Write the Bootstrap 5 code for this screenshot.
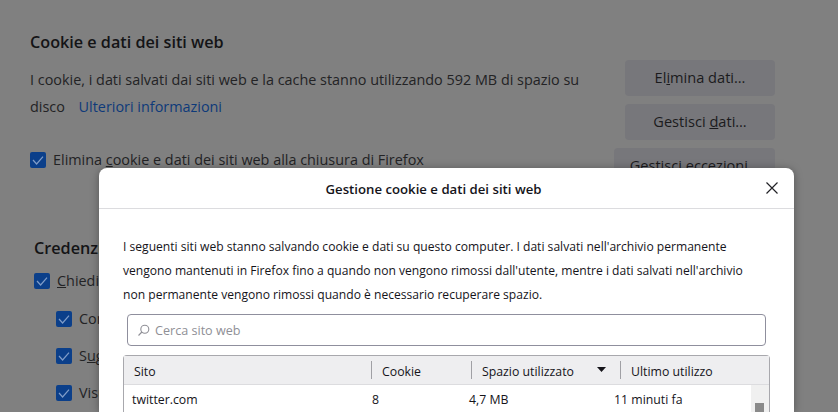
<!DOCTYPE html>
<html lang="it">
<head>
<meta charset="utf-8">
<title>Gestione cookie</title>
<link href="https://cdn.jsdelivr.net/npm/bootstrap@5.3.0/dist/css/bootstrap.min.css" rel="stylesheet">
<style>
html,body{height:412px;overflow:hidden}
body{background:#808080;color:#1b1b1d;font-family:"Open Sans","Noto Sans",sans-serif;font-size:14.4px;position:relative}
.pref-page{padding:32px 63px 0 30px;width:838px}
.pref-title{font-size:16.2px;font-weight:600;line-height:20px;margin:0;color:#141416}
.pref-row{margin-top:8px}
.pref-text{width:560px;line-height:27px;margin-top:6px;color:#232325}
.pref-text a{color:#0e3a7a;text-decoration:none;margin-left:10px}
.pref-btns{width:150px;gap:8px}
.pref-btn{height:36px;background:#77777b;border-radius:4px;border:0;color:#1b1b1d;font-size:14.6px;padding:0;width:150px;flex:none}
.pref-btn-wide{width:161px}
.chk{width:16px;height:16px;flex:none;background:#0b3f8a;border-radius:2px;display:block}
.pref-check{gap:7px;line-height:20px;color:#232325}
.pref-third{margin-top:2px}
.cred-block{margin-top:54px;margin-left:4px;width:65px;overflow:hidden;white-space:nowrap}
.cred-title{font-size:16.2px;font-weight:600;line-height:20px;margin:0 0 13px;color:#141416}
.cred-sub{margin-left:22px;margin-top:17px}
.cred-first{margin-top:18px}
.dlg{position:absolute;left:99px;top:168px;width:695px;height:244px;background:#fff;border:0;border-radius:8px 8px 0 0;box-shadow:0 1px 8px rgba(0,0,0,.35);color:#15141a;overflow:hidden}
.dlg-head{height:41px;border-bottom:1px solid #dcdcdf;position:relative;padding-right:26px}
.dlg-title{font-size:13.2px;font-weight:600;margin:0;line-height:42px}
.dlg-close{position:absolute;right:15px;top:13px;width:14px;height:14px;padding:0;border:0;background:none;display:block}
.dlg-body{padding:26px 24px 0}
.dlg-text{font-size:12.1px;line-height:24px;margin:0;color:#15141a;white-space:nowrap}
.dlg-search{margin:7px 4px 0;width:639px;height:32px;border:1px solid #8f8f9d;border-radius:4px;gap:5px;padding-left:9px;color:#8f8f96;font-size:12.6px}
.dlg-search span{padding-top:2px}
.dlg-table{margin-top:9px;width:647px;border:1px solid #a8a8ad;border-bottom:0;border-radius:4px 4px 0 0;font-size:12.3px}
.dlg-thead{display:grid;grid-template-columns:247px 100px 149px 1fr;height:29px;background:#eeeef0;border-bottom:1px solid #dcdcdf;align-items:center}
.dlg-th{padding-left:10px;height:18px;line-height:22px;border-left:1px solid #a0a0a5;position:relative}
.dlg-th:first-child{border-left:0}
.sort-arrow{position:absolute;right:14px;top:6px;display:block}
.dlg-tr{display:grid;grid-template-columns:240px 97px 145px 1fr;height:28px;align-items:center;padding-left:8px;padding-top:2px;position:relative}
.dlg-scroll{position:absolute;right:0;top:0;width:18px;height:28px;background:#f0f0f0}
.dlg-thumb{position:absolute;left:4px;top:18px;width:9px;height:10px;background:#8a8a8a}
</style>
</head>
<body>
<div class="pref-page">
  <h2 class="pref-title">Cookie e dati dei siti web</h2>
  <div class="d-flex justify-content-between align-items-start pref-row">
    <div class="pref-text">I cookie, i dati salvati dai siti web e la cache stanno utilizzando 592 MB di spazio su disco <a href="#">Ulteriori informazioni</a></div>
    <div class="d-flex flex-column pref-btns">
      <button class="pref-btn" type="button">El<u>i</u>mina dati…</button>
      <button class="pref-btn" type="button">Gestisci <u>d</u>ati…</button>
    </div>
  </div>
  <div class="d-flex justify-content-between align-items-start pref-row">
    <div class="d-flex align-items-center pref-check pref-third">
      <svg class="chk" viewBox="0 0 16 16"><path d="M3 8l3.6 4L13 4.6" fill="none" stroke="#7f9cc8" stroke-width="1.2"/></svg>
      <span>Elimina <u>c</u>ookie e dati dei siti web alla chiusura di Firefox</span>
    </div>
    <button class="pref-btn pref-btn-wide" type="button">Gestisci eccezioni…</button>
  </div>
  <div class="cred-block">
    <h2 class="cred-title">Credenziali e password</h2>
    <div class="d-flex align-items-center pref-check">
      <svg class="chk" viewBox="0 0 16 16"><path d="M3 8l3.6 4L13 4.6" fill="none" stroke="#7f9cc8" stroke-width="1.2"/></svg>
      <span><u>C</u>hiedi se salvare le credenziali di accesso ai siti web</span>
    </div>
    <div class="d-flex align-items-center pref-check cred-sub cred-first">
      <svg class="chk" viewBox="0 0 16 16"><path d="M3 8l3.6 4L13 4.6" fill="none" stroke="#7f9cc8" stroke-width="1.2"/></svg>
      <span>Compila automaticamente nome utente e password</span>
    </div>
    <div class="d-flex align-items-center pref-check cred-sub">
      <svg class="chk" viewBox="0 0 16 16"><path d="M3 8l3.6 4L13 4.6" fill="none" stroke="#7f9cc8" stroke-width="1.2"/></svg>
      <span>S<u>u</u>ggerisci e genera password complesse</span>
    </div>
    <div class="d-flex align-items-center pref-check cred-sub">
      <svg class="chk" viewBox="0 0 16 16"><path d="M3 8l3.6 4L13 4.6" fill="none" stroke="#7f9cc8" stroke-width="1.2"/></svg>
      <span>Visualizza avvisi per password di siti web vulnerabili</span>
    </div>
  </div>
</div>

<div class="dlg">
  <div class="dlg-head text-center">
    <h1 class="dlg-title">Gestione cookie e dati dei siti web</h1>
    <button class="dlg-close" type="button" aria-label="Chiudi">
      <svg width="14" height="14" viewBox="0 0 14 14" class="d-block"><path d="M1.5 1.5l11 11M12.5 1.5l-11 11" stroke="#222226" stroke-width="1.2" fill="none"/></svg>
    </button>
  </div>
  <div class="dlg-body">
    <p class="dlg-text">I seguenti siti web stanno salvando cookie e dati su questo computer. I dati salvati nell'archivio permanente<br>vengono mantenuti in Firefox fino a quando non vengono rimossi dall'utente, mentre i dati salvati nell'archivio<br>non permanente vengono rimossi quando è necessario recuperare spazio.</p>
    <div class="d-flex align-items-center dlg-search">
      <svg width="13" height="13" viewBox="0 0 13 13"><circle cx="7.8" cy="5.2" r="4" fill="none" stroke="#8f8f96" stroke-width="1.1"/><path d="M4.9 8L1.5 11.5" stroke="#8f8f96" stroke-width="1.1" fill="none"/></svg>
      <span>Cerca sito web</span>
    </div>
    <div class="dlg-table">
      <div class="dlg-thead">
        <div class="dlg-th">Sito</div>
        <div class="dlg-th">Cookie</div>
        <div class="dlg-th">Spazio utilizzato<svg class="sort-arrow" width="9" height="5" viewBox="0 0 9 5"><path d="M0 0h9L4.5 5z" fill="#15141a"/></svg></div>
        <div class="dlg-th">Ultimo utilizzo</div>
      </div>
      <div class="dlg-tr">
        <div>twitter.com</div><div>8</div><div>4,7 MB</div><div>11 minuti fa</div>
        <div class="dlg-scroll"><div class="dlg-thumb"></div></div>
      </div>
    </div>
  </div>
</div>
<script src="https://cdn.jsdelivr.net/npm/bootstrap@5.3.0/dist/js/bootstrap.bundle.min.js"></script>
</body>
</html>
